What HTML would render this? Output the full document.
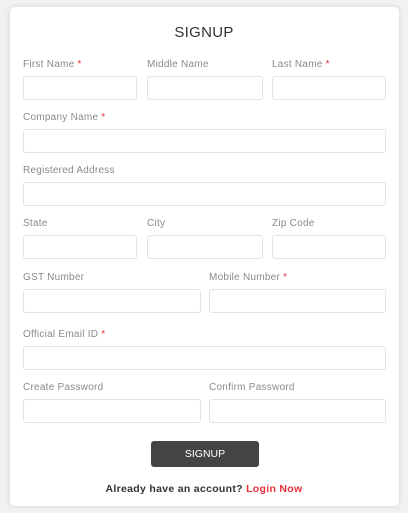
<!DOCTYPE html>
<html><head><style>
body{margin:0;width:408px;height:513px;background:#f1f1f1;font-family:"Liberation Sans",sans-serif;position:relative;overflow:hidden}
.card{position:absolute;left:10px;top:7px;width:389px;height:499px;background:#fff;border-radius:5px;box-shadow:0 0 6px rgba(0,0,0,.12)}
.l{position:absolute;font-size:10px;letter-spacing:.25px;color:#8a8a8a;line-height:12px}
.l b{color:#e8303c;font-weight:normal}
.i{position:absolute;height:24px;border:1px solid #e3e3e3;border-radius:3px;box-sizing:border-box;background:#fff}
.t{position:absolute;left:0;width:408px;text-align:center;top:24px;font-size:15px;color:#333;letter-spacing:.3px}
.btn{position:absolute;left:151px;top:441px;width:108px;height:26px;background:#444;border-radius:3px;color:#fff;font-size:10.5px;text-align:center;line-height:26px}
.f{position:absolute;left:0;width:408px;text-align:center;top:483px;font-size:10.5px;letter-spacing:.3px;font-weight:bold;color:#333}
.f span{color:#e8303c}
</style></head><body>
<div class="card"></div>
<div class="t">SIGNUP</div>
<div class="l" style="left:23px;top:59px">First Name <b>*</b></div>
<div class="l" style="left:147px;top:59px">Middle Name</div>
<div class="l" style="left:272px;top:59px">Last Name <b>*</b></div>
<div class="i" style="left:23px;top:76px;width:114px"></div>
<div class="i" style="left:147px;top:76px;width:116px"></div>
<div class="i" style="left:272px;top:76px;width:114px"></div>
<div class="l" style="left:23px;top:112px">Company Name <b>*</b></div>
<div class="i" style="left:23px;top:129px;width:363px"></div>
<div class="l" style="left:23px;top:165px">Registered Address</div>
<div class="i" style="left:23px;top:182px;width:363px"></div>
<div class="l" style="left:23px;top:218px">State</div>
<div class="l" style="left:147px;top:218px">City</div>
<div class="l" style="left:272px;top:218px">Zip Code</div>
<div class="i" style="left:23px;top:235px;width:114px"></div>
<div class="i" style="left:147px;top:235px;width:116px"></div>
<div class="i" style="left:272px;top:235px;width:114px"></div>
<div class="l" style="left:23px;top:272px">GST Number</div>
<div class="l" style="left:209px;top:272px">Mobile Number <b>*</b></div>
<div class="i" style="left:23px;top:289px;width:178px"></div>
<div class="i" style="left:209px;top:289px;width:177px"></div>
<div class="l" style="left:23px;top:329px">Official Email ID <b>*</b></div>
<div class="i" style="left:23px;top:346px;width:363px"></div>
<div class="l" style="left:23px;top:382px">Create Password</div>
<div class="l" style="left:209px;top:382px">Confirm Password</div>
<div class="i" style="left:23px;top:399px;width:178px"></div>
<div class="i" style="left:209px;top:399px;width:177px"></div>
<div class="btn">SIGNUP</div>
<div class="f">Already have an account? <span>Login Now</span></div>
</body></html>
